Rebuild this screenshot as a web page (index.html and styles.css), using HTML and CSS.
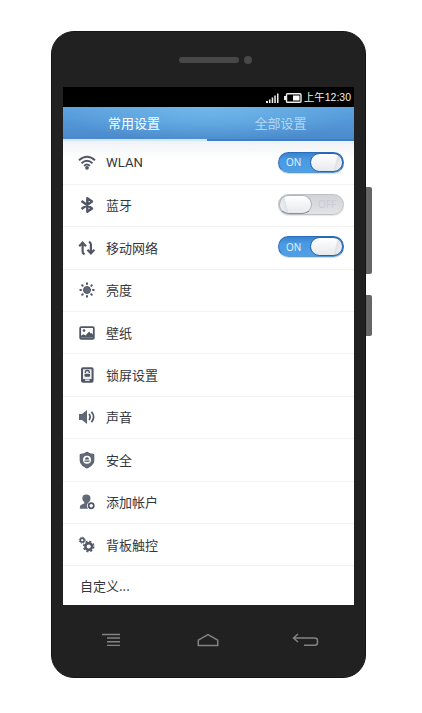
FILE: index.html
```
<!DOCTYPE html>
<html lang="zh-CN">
<head>
<meta charset="utf-8">
<title>设置</title>
<link rel="stylesheet" href="styles.css">
</head>
<body>
<div class="phone">
  <div class="side side-volume"></div>
  <div class="side side-power"></div>
  <div class="earpiece"><span class="speaker"></span><span class="sensor"></span></div>
  <main class="screen">
    <div class="status">
      <svg class="signal" width="13" height="10" viewBox="0 0 13 10" fill="#eee"><path d="M0 8h2v2H0zM3 6.500h1.500V10H3zM5.700 4.500h1.500V10H5.700zM8.300 2.500h1.500V10H8.300zM11 0.500h1.500v9.500h-1.500z"/></svg>
      <svg class="battery" width="18" height="10" viewBox="0 0 18 10"><path d="M0 3h2v4H0z" fill="#eee"/><rect x="2.500" y=".75" width="14.500" height="8.500" rx="1" fill="none" stroke="#eee" stroke-width="1.400"/><path d="M9 2.500h6.500v5H9z" fill="#fff"/></svg>
      <span class="clock">上午12:30</span>
    </div>
    <nav class="tabs"><div class="tab tab-active">常用设置</div><div class="tab">全部设置</div></nav>
    <div class="list">
      <div class="row"><svg class="icon" viewBox="0 0 20 20"><g fill="none" stroke="#515766" stroke-width="1.900"><path d="M2 7.200Q10 .2 18 7.200M4.500 10.200Q10 5.300 15.500 10.200M7 12.900Q10 10.300 13 12.900"/></g><circle cx="10" cy="14.800" r="1.900" fill="#515766"/></svg><span class="label latin">WLAN</span><span class="toggle on"><span class="state">ON</span><span class="knob"></span></span></div>
      <div class="row"><svg class="icon" viewBox="0 0 20 20"><path d="M4.500 6 15 13.500 10.300 16.800V3.200L15 6.500 4.500 14" fill="none" stroke="#515766" stroke-width="2.400" stroke-linejoin="round"/></svg><span class="label">蓝牙</span><span class="toggle off"><span class="knob"></span><span class="state">OFF</span></span></div>
      <div class="row"><svg class="icon" viewBox="0 0 20 20"><g fill="none" stroke="#515766" stroke-width="2.200"><path d="M5.600 5v8.500q0 2 2 2.800M2.200 8.300l3.400-3.600L9 8.300M13.900 15V6.500q0-2-2-2.800M10.500 11.700l3.400 3.600 3.400-3.600"/></g></svg><span class="label">移动网络</span><span class="toggle on"><span class="state">ON</span><span class="knob"></span></span></div>
      <div class="row"><svg class="icon" viewBox="0 0 20 20"><circle cx="10" cy="10" r="3.500" fill="#626978" stroke="#515766"/><g stroke="#515766" stroke-width="2" stroke-linecap="round"><path d="M10 3.300v.7M10 16v.7M3.300 10H4M16 10h.7M5.200 5.200l.5.500M14.300 14.300l.5.500M5.200 14.800l.5-.5M14.300 5.700l.5-.5"/></g></svg><span class="label">亮度</span></div>
      <div class="row"><svg class="icon" viewBox="0 0 20 20"><rect x="3.200" y="4.200" width="13.600" height="11.600" rx="1" fill="#fff" stroke="#515766" stroke-width="1.800"/><circle cx="7" cy="7.600" r="1.300" fill="#515766"/><path d="M4 14.800v-2l2.500-1.600 2 1.200 3.700-3.900 1.500 2 1-.6 1.300 1.800v3.100z" fill="#515766"/></svg><span class="label">壁纸</span></div>
      <div class="row"><svg class="icon" viewBox="0 0 20 20"><rect x="5" y="3.200" width="10.600" height="13.600" rx="1" fill="#eee" stroke="#515766" stroke-width="2"/><path d="M5 14h10.500v3H5z" fill="#515766"/><path d="M8 14.500h4.600v1.300H8z" fill="#fff"/><path d="M8.300 8V7.300q0-1.800 2-1.800t2 1.800V8" fill="none" stroke="#515766" stroke-width="1.300"/><rect x="7.500" y="8.700" width="5.600" height="3" rx="1" fill="#515766"/></svg><span class="label">锁屏设置</span></div>
      <div class="row"><svg class="icon" viewBox="0 0 20 20"><path d="M2 7h3L10 3v14l-5-4H2z" fill="#606776"/><path d="M12 7q2.300 3 0 6M14.500 4.800q4.200 5.200 0 10.400" fill="none" stroke="#515766" stroke-width="1.700"/></svg><span class="label">声音</span></div>
      <div class="row"><svg class="icon" viewBox="0 0 20 20"><path d="M10 2.200q3 2.200 6.800 2.200v6q0 4.600-6.800 7.700-6.800-3.100-6.800-7.700v-6Q7 4.400 10 2.200z" fill="#626978" stroke="#515766"/><circle cx="10" cy="9.800" r="4" fill="#fff"/><path d="M7.500 10.500h5v1.300h-5zM8 9.500q0-2.300 2-2.300t2 2.300z" fill="#515766"/></svg><span class="label">安全</span></div>
      <div class="row"><svg class="icon" viewBox="0 0 20 20"><path d="M9.300 2.500q4.200 0 4.200 4 0 2-1.600 3.700v1.300l3 1.500v3.700H3q-.8-3.200 1.800-4.200l2.500-1.100v-1.200Q5.300 8.500 5.300 6.500q0-4 4-4z" fill="#626978"/><circle cx="14.200" cy="13.700" r="4.300" fill="#fff"/><circle cx="14.200" cy="13.700" r="2.600" fill="none" stroke="#515766" stroke-width="1.700"/></svg><span class="label">添加帐户</span></div>
      <div class="row"><svg class="icon" viewBox="0 0 20 20"><g fill="none" stroke="#515766"><circle cx="5.200" cy="5.200" r="1.900" stroke-width="1.500"/><circle cx="5.200" cy="5.200" r="3" stroke-width="1" stroke-dasharray="1.300 1.056"/><circle cx="11.700" cy="11.500" r="3.300" stroke-width="2.400"/><circle cx="11.700" cy="11.500" r="5" stroke-width="1.600" stroke-dasharray="2.100 1.827"/></g></svg><span class="label">背板触控</span></div>
      <div class="row custom"><span>自定义...</span></div>
    </div>
  </main>
  <div class="keys">
    <svg width="18" height="14" viewBox="0 0 18 14" fill="none" stroke="#838383" stroke-width="1.400"><path d="M0 1.500h18M5 5h13M5 8.700h13M5 12.400h13"/></svg>
    <svg width="22" height="14" viewBox="0 0 22 14" fill="none" stroke="#838383" stroke-width="1.500"><path d="M1.300 12.400V7.200L11 1.700l9.700 5.500v5.200z"/></svg>
    <svg width="27" height="14" viewBox="0 0 27 14" fill="none" stroke="#838383" stroke-width="1.500"><path d="M6 1 1.500 5 6 9M1.500 5h21q3 0 3 2.500v2q0 2.800-3 2.800H12"/></svg>
  </div>
</div>
</body>
</html>
```
FILE: styles.css
```
* { box-sizing: border-box; }
body {
  margin: 0;
  height: 713px;
  background: #fff;
  padding: 31px 0 0 51px;
  overflow: hidden;
  font-family: "Noto Sans CJK SC", sans-serif;
}
.phone {
  position: relative;
  width: 315px;
  height: 647px;
  border-radius: 23px;
  background: #212121;
  border: 1px solid #151515;
  padding: 0 11px;
}
.side {
  position: absolute;
  left: 314px;
  width: 6px;
  background: #666;
  border-radius: 0 2px 2px 0;
}
.side-volume { top: 155px; height: 87px; }
.side-power { top: 263px; height: 41px; }
.earpiece {
  height: 55px;
  display: flex;
  align-items: center;
  gap: 5px;
  padding-left: 116px;
}
.speaker { width: 60px; height: 6px; border-radius: 3px; background: #484848; }
.sensor { width: 8px; height: 8px; border-radius: 50%; background: #484848; }
.screen { width: 291px; height: 518px; background: #fff; overflow: hidden; }
.status {
  height: 20px;
  background: #000;
  color: #eee;
  display: flex;
  align-items: center;
  justify-content: flex-end;
  padding: 1px 3px 0 0;
}
.signal { margin-right: 5px; }
.battery { margin-right: 2px; }
.clock { font: 10.5px/19px "Liberation Sans", "Noto Sans CJK SC", sans-serif; white-space: nowrap; }
.tabs {
  display: flex;
  height: 34px;
  background: radial-gradient(ellipse 160px 34px at 50% 0, #6fb8ea, rgba(111, 184, 234, 0)), linear-gradient(#5aa0df, #4a89cb);
}
.tab {
  flex: 1;
  text-align: center;
  font-size: 13px;
  line-height: 32px;
  color: #b3d7f2;
  border-bottom: 2px solid #3d7fc9;
}
.tab-active {
  flex: 0 0 144px;
  padding-right: 2px;
  color: #fff;
  border-bottom-color: #d3e7f7;
}
.list { padding-top: 1.4px; background: linear-gradient(#eff2f6, #fff 18px); }
.row {
  height: 42.4px;
  display: flex;
  align-items: center;
  border-bottom: 1px solid #f3f3f3;
  padding: 0 10px 0 14px;
}
.icon { width: 20px; height: 20px; flex: none; }
.label { margin-left: 9px; font-size: 13px; line-height: 20px; color: #34363d; }
.latin { font-family: Roboto, sans-serif; font-size: 13.2px; }
.custom { height: 39px; padding-left: 17px; font-size: 13px; color: #34363d; border: 0; }
.toggle {
  margin-left: auto;
  width: 66px;
  height: 21px;
  border-radius: 11px;
  display: flex;
  align-items: center;
  justify-content: space-between;
  font: 10px/18px "Open Sans", sans-serif;
  position: relative;
  top: -1px;
}
.on {
  color: #e8f4ff;
  background: linear-gradient(#3a83d0, #4a9ae2 35%, #4d9fe6);
  border: 1px solid #2c6dbb;
  border-bottom-color: #5a96d2;
  padding-left: 7px;
  box-shadow: 0 1px 1px #d4dce5;
}
.off {
  color: #c8cbd1;
  background: linear-gradient(#d2d3d7, #e2e3e7);
  border: 1px solid #c0c1c5;
  padding-right: 7px;
  box-shadow: 0 1px 1px #e8e8e8;
}
.knob {
  width: 33px;
  height: 19px;
  border-radius: 10px;
  background: linear-gradient(105deg, rgba(255, 255, 255, 0) 75%, #dfe2e6 77%, #f4f5f7), linear-gradient(#fff, #e7e9ed);
  border: 1px solid #aeb5be;
  border-bottom-color: #858e9a;
}
.on .knob { border-color: #2c62a3; }
.off .knob { background: linear-gradient(75deg, #f4f5f7, #dfe2e6 23%, rgba(255, 255, 255, 0) 25%), linear-gradient(#fff, #e7e9ed); }
.keys {
  height: 68px;
  display: flex;
  align-items: center;
  justify-content: space-between;
  padding: 2px 35px 0 39px;
}
.keys svg:nth-child(2) { margin-left: 3px; }
```
